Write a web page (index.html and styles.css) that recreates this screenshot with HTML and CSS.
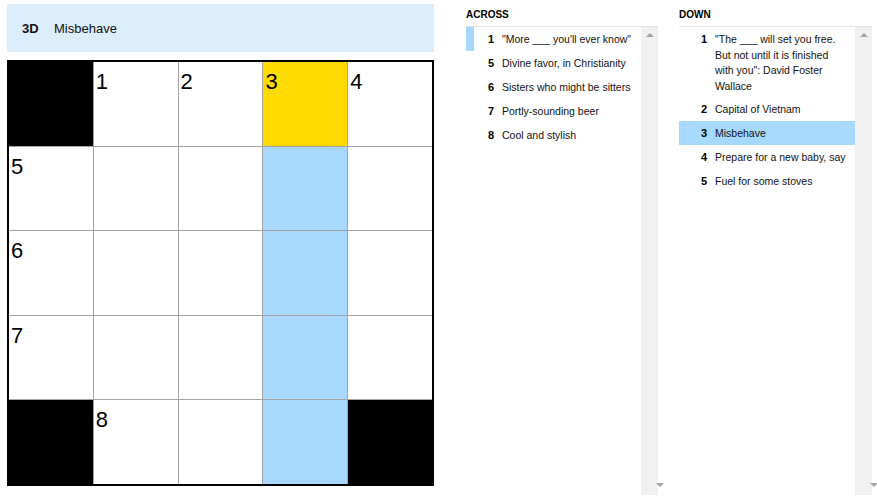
FILE: index.html
```html
<!DOCTYPE html>
<html lang="en">
<head>
  <meta charset="UTF-8">
  <title>Mini Crossword</title>
  <link rel="stylesheet" href="styles.css">
</head>
<body>
  <div class="page">
    <div class="board">
      <div class="clue-bar">
        <span class="clue-bar-num">3D</span>
        <span class="clue-bar-text">Misbehave</span>
      </div>
      <div class="grid">
        <div class="cell black"></div>
        <div class="cell"><span class="num">1</span></div>
        <div class="cell"><span class="num">2</span></div>
        <div class="cell selected"><span class="num">3</span></div>
        <div class="cell"><span class="num">4</span></div>

        <div class="cell"><span class="num">5</span></div>
        <div class="cell"></div>
        <div class="cell"></div>
        <div class="cell word"></div>
        <div class="cell"></div>

        <div class="cell"><span class="num">6</span></div>
        <div class="cell"></div>
        <div class="cell"></div>
        <div class="cell word"></div>
        <div class="cell"></div>

        <div class="cell"><span class="num">7</span></div>
        <div class="cell"></div>
        <div class="cell"></div>
        <div class="cell word"></div>
        <div class="cell"></div>

        <div class="cell black"></div>
        <div class="cell"><span class="num">8</span></div>
        <div class="cell"></div>
        <div class="cell word"></div>
        <div class="cell black"></div>
      </div>
    </div>

    <div class="clue-list across">
      <h3>ACROSS</h3>
      <div class="list-wrap">
        <ol class="clues">
          <li class="crossing"><span class="n">1</span><span class="t">"More ___ you'll ever know"</span></li>
          <li><span class="n">5</span><span class="t">Divine favor, in Christianity</span></li>
          <li><span class="n">6</span><span class="t">Sisters who might be sitters</span></li>
          <li><span class="n">7</span><span class="t">Portly-sounding beer</span></li>
          <li><span class="n">8</span><span class="t">Cool and stylish</span></li>
        </ol>
        <div class="scrollbar"><span class="arrow up"></span><span class="arrow down"></span></div>
      </div>
    </div>

    <div class="clue-list down">
      <h3>DOWN</h3>
      <div class="list-wrap">
        <ol class="clues">
          <li><span class="n">1</span><span class="t">"The ___ will set you free. But not until it is finished with you": David Foster Wallace</span></li>
          <li><span class="n">2</span><span class="t">Capital of Vietnam</span></li>
          <li class="current"><span class="n">3</span><span class="t">Misbehave</span></li>
          <li><span class="n">4</span><span class="t">Prepare for a new baby, say</span></li>
          <li><span class="n">5</span><span class="t">Fuel for some stoves</span></li>
        </ol>
        <div class="scrollbar"><span class="arrow up"></span><span class="arrow down"></span></div>
      </div>
    </div>
  </div>
</body>
</html>
```

FILE: styles.css
```css
* {
  box-sizing: border-box;
}

body {
  margin: 0;
  background: #ffffff;
  color: #121212;
  font-family: "Liberation Sans", Arial, sans-serif;
}

.page {
  display: flex;
  align-items: flex-start;
  padding: 4px 0 0 7px;
}

/* board */
.board {
  width: 427px;
  flex-shrink: 0;
}

.clue-bar {
  display: flex;
  align-items: center;
  height: 48px;
  padding-left: 15px;
  background: #dcedfb;
  font-size: 13px;
}

.clue-bar-num {
  width: 32px;
  font-weight: bold;
}

.grid {
  display: grid;
  grid-template-columns: repeat(5, 1fr);
  grid-template-rows: repeat(5, 1fr);
  gap: 1px;
  width: 427px;
  height: 426px;
  margin-top: 8px;
  border: 2px solid #000;
  background: #a3a3a3;
}

.cell {
  background: #fff;
  padding: 9px 0 0 2px;
}

.cell.black {
  background: #000;
}

.cell.word {
  background: #a7d8ff;
}

.cell.selected {
  background: #ffda00;
}

.num {
  display: block;
  font-size: 22px;
  line-height: 1;
  color: #000;
}

/* clue lists */
.clue-list {
  flex-shrink: 0;
}

.across {
  width: 192px;
  margin-left: 32px;
}

.down {
  width: 193px;
  margin-left: 21px;
}

.clue-list h3 {
  margin: 0;
  padding: 5px 0 5px;
  font-size: 10px;
  line-height: 12px;
  font-weight: bold;
  color: #000;
  border-bottom: 1px solid #e3e3e3;
}

.list-wrap {
  display: flex;
  height: 468px;
}

.clues {
  flex: 1;
  list-style: none;
  margin: 0;
  padding: 0;
}

.clues li {
  display: flex;
  min-height: 24px;
  padding: 5px 6px 3px 0;
  border-left: 8px solid transparent;
  font-size: 10.5px;
  line-height: 15.5px;
}

.clues .n {
  flex-shrink: 0;
  width: 20px;
  margin-right: 8px;
  text-align: right;
  font-weight: bold;
  font-size: 11px;
  color: #000;
}

.clues li.crossing {
  border-left-color: #a7d8ff;
}

.clues li.current {
  background: #a7d8ff;
}

.scrollbar {
  width: 17px;
  display: flex;
  flex-direction: column;
  justify-content: space-between;
  align-items: center;
  padding: 6px 0 8px;
  background: #f1f1f1;
}

.arrow {
  width: 0;
  height: 0;
  border-left: 4px solid transparent;
  border-right: 4px solid transparent;
}

.arrow.up {
  border-bottom: 4px solid #a3a3a3;
}

.arrow.down {
  border-top: 4px solid #a3a3a3;
}
```
